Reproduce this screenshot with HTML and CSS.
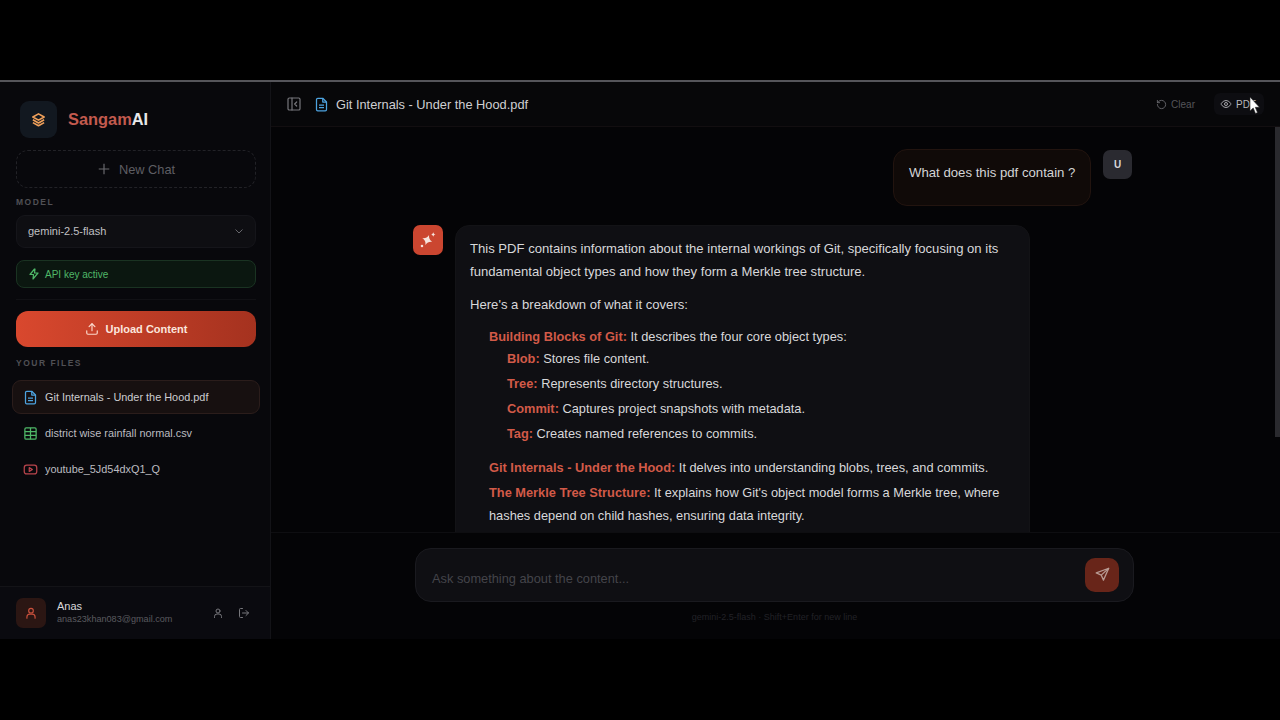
FILE: index.html
```html
<!DOCTYPE html>
<html lang="en">
<head>
    <meta charset="UTF-8">
    <title>SangamAI</title>
    <link rel="stylesheet" href="styles.css">
</head>
<body>
    <div class="app">
        <aside class="sidebar">
            <div class="brand">
                <div class="brand-icon">
                    <svg width="15" height="15" viewBox="0 0 24 24" fill="none" stroke="#f0a05a" stroke-width="2.6" stroke-linejoin="round"><path d="M12 3 3 8l9 5 9-5-9-5z"/><path d="m3 12.500 9 5 9-5"/><path d="m3 17 9 5 9-5"/></svg>
                </div>
                <div class="brand-name"><span class="brand-red">Sangam</span>AI</div>
            </div>
            <div class="new-chat">
                <svg width="14" height="14" viewBox="0 0 24 24" fill="none" stroke="#6a6a6f" stroke-width="2"><path d="M12 3v18M3 12h18"/></svg>
                <span>New Chat</span>
            </div>
            <div class="side-label model-label">MODEL</div>
            <div class="model-select">
                <span>gemini-2.5-flash</span>
                <svg width="12" height="12" viewBox="0 0 24 24" fill="none" stroke="#66666b" stroke-width="2"><path d="m5 9 7 7 7-7"/></svg>
            </div>
            <div class="api-status">
                <svg width="12" height="12" viewBox="0 0 24 24" fill="none" stroke="#4fb868" stroke-width="2.4" stroke-linejoin="round"><path d="M13 2 4 13h7l-1 9 10-12h-7l1-8z"/></svg>
                <span>API key active</span>
            </div>
            <div class="side-divider"></div>
            <button class="upload-btn">
                <svg width="14" height="14" viewBox="0 0 24 24" fill="none" stroke="#fbd9cc" stroke-width="2" stroke-linecap="round" stroke-linejoin="round"><path d="M21 15v4a2 2 0 0 1-2 2H5a2 2 0 0 1-2-2v-4"/><path d="m17 8-5-5-5 5"/><path d="M12 3v12"/></svg>
                <span>Upload Content</span>
            </button>
            <div class="side-label files-label">YOUR FILES</div>
            <div class="file-item active">
                <svg width="15" height="15" viewBox="0 0 24 24" fill="none" stroke="#4da3e0" stroke-width="2" stroke-linejoin="round"><path d="M14 2H6a2 2 0 0 0-2 2v16a2 2 0 0 0 2 2h12a2 2 0 0 0 2-2V8z"/><path d="M14 2v6h6M8 13h8M8 17h8"/></svg>
                <span>Git Internals - Under the Hood.pdf</span>
            </div>
            <div class="file-item">
                <svg width="15" height="15" viewBox="0 0 24 24" fill="none" stroke="#4fb868" stroke-width="2"><rect x="3" y="3" width="18" height="18" rx="2"/><path d="M3 9h18M3 15h18M12 3v18"/></svg>
                <span>district wise rainfall normal.csv</span>
            </div>
            <div class="file-item">
                <svg width="15" height="15" viewBox="0 0 24 24" fill="none" stroke="#b8444c" stroke-width="2" stroke-linejoin="round"><rect x="2" y="5" width="20" height="14" rx="4"/><path d="m10 9 5 3-5 3z"/></svg>
                <span>youtube_5Jd54dxQ1_Q</span>
            </div>
            <div class="user-row">
                <div class="user-avatar">
                    <svg width="14" height="14" viewBox="0 0 24 24" fill="none" stroke="#c9503c" stroke-width="2" stroke-linecap="round"><circle cx="12" cy="8" r="4"/><path d="M5 21v-2a5 5 0 0 1 5-5h4a5 5 0 0 1 5 5v2"/></svg>
                </div>
                <div class="user-info">
                    <div class="user-name">Anas</div>
                    <div class="user-mail">anas23khan083@gmail.com</div>
                </div>
                <svg class="user-action" width="12" height="12" viewBox="0 0 24 24" fill="none" stroke="#77777c" stroke-width="2" stroke-linecap="round"><circle cx="12" cy="8" r="4"/><path d="M5 21v-2a5 5 0 0 1 5-5h4a5 5 0 0 1 5 5v2"/></svg>
                <svg class="user-action" width="12" height="12" viewBox="0 0 24 24" fill="none" stroke="#77777c" stroke-width="2" stroke-linecap="round" stroke-linejoin="round"><path d="M9 21H5a2 2 0 0 1-2-2V5a2 2 0 0 1 2-2h4"/><path d="m16 17 5-5-5-5"/><path d="M21 12H9"/></svg>
            </div>
        </aside>

        <main class="main">
            <header class="topbar">
                <svg class="panel-icon" width="16" height="16" viewBox="0 0 24 24" fill="none" stroke="#77777c" stroke-width="1.800" stroke-linecap="round" stroke-linejoin="round"><rect x="3" y="3" width="18" height="18" rx="2"/><path d="M9 3v18"/><path d="m16 15-3-3 3-3"/></svg>
                <svg class="title-icon" width="15" height="15" viewBox="0 0 24 24" fill="none" stroke="#4da3e0" stroke-width="2" stroke-linejoin="round"><path d="M14 2H6a2 2 0 0 0-2 2v16a2 2 0 0 0 2 2h12a2 2 0 0 0 2-2V8z"/><path d="M14 2v6h6M8 13h8M8 17h8"/></svg>
                <span class="doc-title">Git Internals - Under the Hood.pdf</span>
                <div class="top-actions">
                    <div class="top-btn clear-btn">
                        <svg width="11" height="11" viewBox="0 0 24 24" fill="none" stroke="#66666b" stroke-width="2" stroke-linecap="round" stroke-linejoin="round"><path d="M3 12a9 9 0 1 0 9-9 9.700 9.700 0 0 0-6.700 2.700L3 8"/><path d="M3 3v5h5"/></svg>
                        <span>Clear</span>
                    </div>
                    <div class="top-btn pdf-btn">
                        <svg width="12" height="12" viewBox="0 0 24 24" fill="none" stroke="#a5a5aa" stroke-width="2"><path d="M2 12s3.500-7 10-7 10 7 10 7-3.500 7-10 7-10-7-10-7z"/><circle cx="12" cy="12" r="3"/></svg>
                        <span>PDF</span>
                    </div>
                </div>
            </header>

            <section class="chat">
                <div class="msg-user">
                    <div class="user-bubble">What does this pdf contain ?</div>
                    <div class="u-avatar">U</div>
                </div>
                <div class="msg-ai">
                    <div class="ai-avatar">
                        <svg width="18" height="18" viewBox="0 0 24 24" fill="#f6e3dc"><path d="M11 5c1 4 3 6 7 7-4 1-6 3-7 7-1-4-3-6-7-7 4-1 6-3 7-7z" transform="rotate(20 11 12)"/><path d="M19 1.500c.4 1.700 1.300 2.600 3 3-1.700.4-2.600 1.300-3 3-.4-1.700-1.300-2.600-3-3 1.700-.4 2.600-1.300 3-3z"/><circle cx="4" cy="20" r="1.700"/></svg>
                    </div>
                    <div class="ai-bubble">
                        <p>This PDF contains information about the internal workings of Git, specifically focusing on its fundamental object types and how they form a Merkle tree structure.</p>
                        <p>Here's a breakdown of what it covers:</p>
                        <div class="topic first">
                            <div class="topic-head"><b>Building Blocks of Git:</b> It describes the four core object types:</div>
                            <div class="sub"><b>Blob:</b> Stores file content.</div>
                            <div class="sub"><b>Tree:</b> Represents directory structures.</div>
                            <div class="sub"><b>Commit:</b> Captures project snapshots with metadata.</div>
                            <div class="sub"><b>Tag:</b> Creates named references to commits.</div>
                        </div>
                        <div class="topic"><b>Git Internals - Under the Hood:</b> It delves into understanding blobs, trees, and commits.</div>
                        <div class="topic"><b>The Merkle Tree Structure:</b> It explains how Git's object model forms a Merkle tree, where hashes depend on child hashes, ensuring data integrity.</div>
                    </div>
                </div>
                <div class="scroll-thumb"></div>
            </section>

            <footer class="composer">
                <div class="input-box">
                    <span class="placeholder">Ask something about the content...</span>
                    <div class="send-btn">
                        <svg width="15" height="15" viewBox="0 0 24 24" fill="none" stroke="#b89a92" stroke-width="2" stroke-linejoin="round"><path d="M22 2 2 9.500l8 3.500 3.500 8z"/><path d="m22 2-12 11"/></svg>
                    </div>
                </div>
                <div class="hint">gemini-2.5-flash · Shift+Enter for new line</div>
            </footer>
        </main>
    </div>

    <svg class="cursor" width="11" height="17" viewBox="0 0 11 17"><path d="M1 0v14l3.200-3 2.300 5.500 2-.9L6.300 10.300H10.500z" fill="#fff" stroke="#222" stroke-width=".6"/></svg>
</body>
</html>
```

FILE: styles.css
```css
* {
    box-sizing: border-box;
}

body {
    margin: 0;
    height: 720px;
    overflow: hidden;
    background: #000;
    padding-top: 80px;
    font-family: "Liberation Sans", Arial, sans-serif;
    font-size: 13.2px;
    color: #e4e4e6;
}

.app {
    display: flex;
    height: 559px;
    border-top: 2px solid #55555a;
    background: #040406;
}

/* sidebar */
.sidebar {
    width: 271px;
    flex-shrink: 0;
    display: flex;
    flex-direction: column;
    padding: 0 14px 0 16px;
    background: #08080c;
    border-right: 1px solid #131317;
}

.brand {
    display: flex;
    align-items: center;
    gap: 11px;
    margin: 19px 0 12px 4px;
}

.brand-icon {
    width: 37px;
    height: 37px;
    border-radius: 9px;
    background: #121820;
    display: flex;
    align-items: center;
    justify-content: center;
}

.brand-name {
    font-size: 16.4px;
    font-weight: bold;
    color: #e8e8ea;
}

.brand-red {
    color: #c25a4e;
}

.new-chat {
    height: 38px;
    border: 1px dashed #222227;
    border-radius: 12px;
    display: flex;
    align-items: center;
    justify-content: center;
    gap: 8px;
    font-size: 12.8px;
    color: #5e5e63;
}

.side-label {
    font-size: 8.500px;
    font-weight: bold;
    letter-spacing: 1.5px;
    color: #505055;
}

.model-label {
    margin-top: 9px;
}

.model-select {
    height: 33px;
    margin-top: 8px;
    padding: 0 10px 2px 11px;
    border: 1px solid #15151a;
    border-radius: 9px;
    background: #0e0e12;
    display: flex;
    align-items: center;
    justify-content: space-between;
    font-size: 11px;
    color: #c0c0c3;
}

.api-status {
    height: 28px;
    margin-top: 12px;
    padding: 0 11px;
    border: 1px solid #1a3322;
    border-radius: 8px;
    background: #0b1710;
    display: flex;
    align-items: center;
    gap: 5px;
    font-size: 10px;
    color: #4fb868;
}

.side-divider {
    height: 1px;
    margin: 11px 0 11px;
    background: #111115;
}

.upload-btn {
    height: 36px;
    border: none;
    border-radius: 12px;
    background: linear-gradient(90deg, #d9482e, #a5321f);
    display: flex;
    align-items: center;
    justify-content: center;
    gap: 7px;
    font-family: inherit;
    font-size: 11px;
    font-weight: bold;
    color: #fbe6de;
}

.files-label {
    margin-top: 11px;
    margin-bottom: 12px;
}

.file-item {
    height: 34px;
    margin: 0 -4px 2px;
    padding: 0 10px 0 10px;
    display: flex;
    align-items: center;
    gap: 7px;
    border: 1px solid transparent;
    border-radius: 9px;
    font-size: 10.9px;
    color: #bcbcc0;
}

.file-item.active {
    background: #171010;
    border-color: #2b1d1b;
    color: #cccccf;
}

.user-row {
    margin: auto -14px 0 -16px;
    height: 53px;
    padding: 0 20px 0 16px;
    border-top: 1px solid #131317;
    display: flex;
    align-items: center;
    background: #0a0a0f;
}

.user-avatar {
    width: 30px;
    height: 30px;
    border-radius: 7px;
    background: #2b1613;
    display: flex;
    align-items: center;
    justify-content: center;
    margin-right: 11px;
}

.user-info {
    flex: 1;
    margin-top: -3px;
}

.user-name {
    font-size: 11px;
    color: #d8d8da;
}

.user-mail {
    font-size: 9.100px;
    color: #5a5a5f;
    margin-top: 2px;
}

.user-action {
    margin-left: 14px;
}

/* main column */
.main {
    flex: 1;
    display: flex;
    flex-direction: column;
    min-width: 0;
}

.topbar {
    height: 45px;
    flex-shrink: 0;
    padding: 0 16px 0 15px;
    display: flex;
    align-items: center;
    border-bottom: 1px solid #120e10;
    background: #070709;
}

.title-icon {
    margin-left: 12px;
}

.doc-title {
    margin-left: 7px;
    font-size: 12.8px;
    color: #cfcfd2;
}

.top-actions {
    margin-left: auto;
    display: flex;
    align-items: center;
    gap: 13px;
}

.top-btn {
    height: 22px;
    padding: 0 6px;
    display: flex;
    align-items: center;
    gap: 4px;
    border-radius: 6px;
    font-size: 10px;
}

.clear-btn {
    color: #55555a;
}

.pdf-btn {
    background: #0d0d11;
    color: #b8b8bc;
    padding-right: 8px;
}

.chat {
    flex: 1;
    min-height: 0;
    overflow: hidden;
    position: relative;
    padding: 22px 148px 0 142px;
}

.msg-user {
    display: flex;
    justify-content: flex-end;
    gap: 12px;
}

.user-bubble {
    width: 198px;
    height: 57px;
    padding: 15px 0 0 15px;
    border: 1px solid #22140f;
    border-radius: 14px;
    background: #100a08;
    color: #d4d4d6;
}

.u-avatar {
    width: 29px;
    height: 29px;
    margin-top: 1px;
    border-radius: 7px;
    background: #2a2a30;
    display: flex;
    align-items: center;
    justify-content: center;
    font-size: 10px;
    font-weight: bold;
    color: #d8d8da;
}

.msg-ai {
    display: flex;
    gap: 12px;
    margin-top: 19px;
    align-items: flex-start;
}

.ai-avatar {
    width: 30px;
    height: 30px;
    flex-shrink: 0;
    border-radius: 7px;
    background: #cb4630;
    display: flex;
    align-items: center;
    justify-content: center;
}

.ai-bubble {
    width: 575px;
    padding: 11px 14px 24px;
    border: 1px solid #131316;
    border-radius: 14px;
    background: #0f0f13;
    line-height: 23px;
    color: #d8d8da;
}

.ai-bubble p {
    margin: 0 0 10px;
    font-size: 13.1px;
}

.ai-bubble b {
    color: #d25a48;
}

.topic {
    margin: 2px 0 0 19px;
    font-size: 12.8px;
}

.topic.first {
    margin-top: 3px;
    margin-bottom: 11px;
}

.topic-head {
    line-height: 21px;
}

.sub {
    margin: 0 0 2px 18px;
}

.scroll-thumb {
    position: absolute;
    right: 0;
    top: 0;
    width: 5px;
    height: 310px;
    background: #2a2a2e;
}

.composer {
    height: 107px;
    flex-shrink: 0;
    padding: 15px 146px 0 144px;
    border-top: 1px solid #0e0e11;
    background: #040406;
}

.input-box {
    height: 54px;
    padding: 0 14px 0 16px;
    border: 1px solid #1a1a1f;
    border-radius: 16px;
    background: #0f0f13;
    display: flex;
    align-items: center;
    justify-content: space-between;
}

.placeholder {
    font-size: 12.8px;
    color: #44444a;
    margin-top: 7px;
}

.send-btn {
    width: 34px;
    height: 34px;
    margin-top: -1px;
    border-radius: 10px;
    background: #682519;
    display: flex;
    align-items: center;
    justify-content: center;
}

.hint {
    margin-top: 10px;
    text-align: center;
    font-size: 9px;
    color: #222226;
}

.cursor {
    position: absolute;
    left: 1249px;
    top: 97px;
}
```
